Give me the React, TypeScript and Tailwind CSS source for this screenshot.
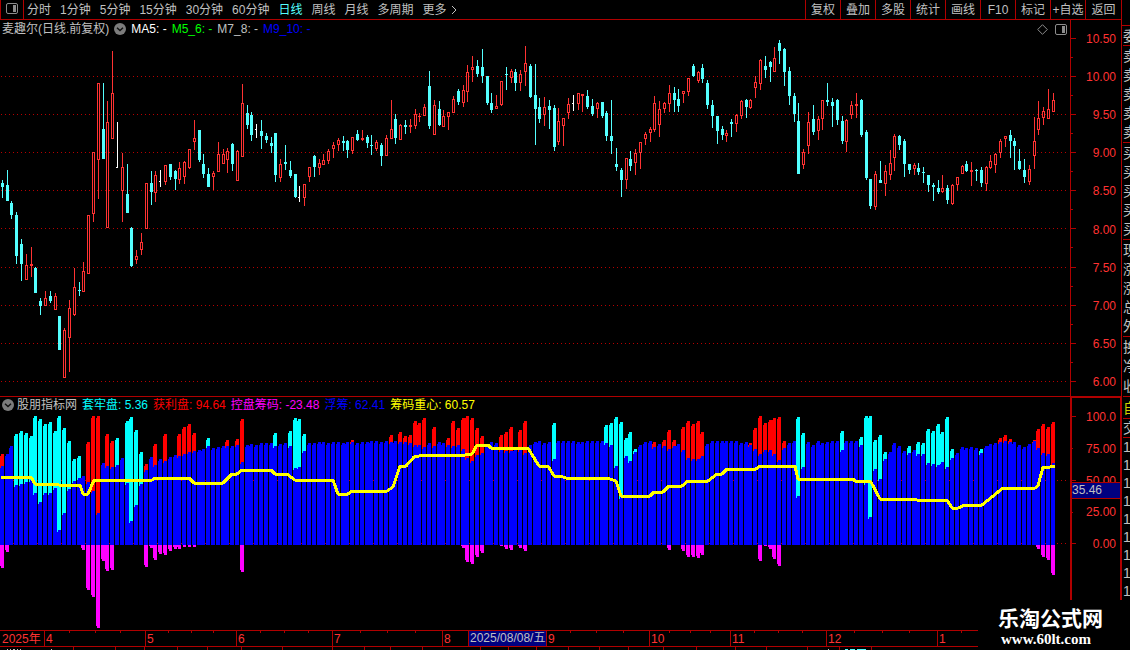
import React from "react";

/* Daily candles: kind (r = up, c = down, w = flat) followed by high, body top, body bottom, low. */
const CANDLES = `
c180,183,187,198 c170,185,201,201 c201,203,215,219 c212,215,256,264 c239,244,264,281 r254,265,280,280 r247,264,266,277 c267,268,293,293 c298,301,306,315 r291,298,306,306
c291,296,301,303 r293,296,310,310 c316,316,350,350 r328,330,378,378 r300,308,338,372 r268,287,315,316 c282,290,291,296 r262,271,292,292 r215,215,274,274 r152,152,214,222
r83,83,160,199 c83,129,159,159 r101,122,228,228 r51,93,139,139 w122,167,168,168 r153,167,191,222 c164,194,213,213 c227,228,266,267 r250,256,260,264 r233,242,250,255
r183,183,229,229 c171,183,192,205 r171,175,193,202 w170,181,182,187 r165,165,182,185 c164,164,177,180 c170,171,179,190 r162,168,180,184 r161,162,177,184 r149,149,168,169
r120,138,142,150 c130,130,160,162 c154,164,174,178 c168,174,187,187 r171,173,177,190 r142,154,172,172 r149,154,164,164 r148,151,160,173 c143,144,164,171 r150,151,181,181
r84,103,157,157 c105,113,125,129 c112,115,135,141 w124,129,130,138 c120,131,136,149 c133,136,140,143 c137,143,146,153 c133,133,175,182 r159,164,178,182 c145,162,164,170
c161,170,176,178 c174,174,197,198 w186,197,198,202 r184,184,198,206 r167,167,177,182 c155,156,167,177 r159,163,168,175 r154,160,165,165 r149,151,161,164 r142,145,149,158
r138,140,145,151 c136,141,143,151 c140,141,150,158 r137,137,151,154 c130,134,140,141 r130,138,140,141 c135,137,143,148 c135,145,146,155 r140,142,149,151 c143,145,156,166
r135,138,156,156 r100,129,139,139 c114,119,138,144 r124,125,140,140 c120,125,127,134 r119,125,127,133 r109,114,126,129 r113,116,117,122 r104,107,116,116 c71,86,126,129
r100,105,135,135 c101,109,125,126 r110,116,127,127 r112,112,117,130 r96,99,113,113 c89,91,102,105 r85,90,103,107 r65,72,92,102 r56,67,70,82 c60,66,74,77
c49,67,76,83 c76,76,103,105 c93,103,110,113 r95,106,109,109 r81,81,105,106 c67,74,75,90 r69,71,78,83 c69,72,83,91 r70,74,83,91 r46,63,72,86
c64,66,97,98 c64,95,109,145 c98,107,119,123 r97,107,115,126 c100,106,110,129 c105,108,147,151 r108,121,142,145 r118,118,126,146 r98,104,113,119 w95,103,104,111
r93,93,104,110 r94,94,96,112 c90,96,107,109 c99,106,114,116 r102,103,109,118 c102,102,116,118 c111,113,136,141 c100,136,141,154 c148,164,167,171 c168,170,180,197
r158,158,180,189 c151,159,166,171 r149,153,163,175 r142,142,153,169 r132,134,139,145 r127,129,133,142 r96,103,130,132 r101,109,125,137 r102,103,109,113 r85,93,104,112
c87,93,100,112 c89,99,106,112 r91,91,94,103 r78,78,92,96 c64,66,76,77 r71,72,81,83 c64,68,79,83 c80,83,105,109 c100,105,116,128 c116,116,131,144
c126,129,135,140 r130,133,136,142 c119,122,124,137 r114,115,124,132 r100,101,116,119 c99,100,107,118 r99,100,108,109 r76,82,88,98 r59,60,84,90 c56,66,70,78
c61,62,67,82 r47,58,72,72 c40,43,51,64 c48,49,72,86 c67,71,96,105 c93,96,114,122 c103,121,174,174 r149,152,165,169 r112,122,146,154 c105,119,132,135
r116,119,131,140 r100,100,119,130 c83,100,102,106 c98,102,106,127 c99,100,120,125 c116,121,141,144 r119,120,142,152 r101,105,115,119 r93,104,106,118 c99,100,135,137
c130,132,178,180 c179,179,206,209 r171,174,207,210 c161,180,183,183 r165,171,184,196 r150,163,175,180 r134,136,158,171 c135,136,145,150 c139,141,164,177 c164,164,170,174
r163,165,169,175 c163,168,172,175 c167,172,173,183 c175,175,185,192 c183,185,187,201 c180,188,192,194 r175,188,192,193 c185,188,200,204 r184,185,204,205 r177,177,185,191
r165,166,174,174 c161,164,171,172 r162,170,172,186 c169,170,171,181 c167,170,183,187 r166,167,184,191 r155,161,168,169 r153,154,165,173 r139,141,153,158 r136,136,139,147
c130,135,141,158 c138,141,146,170 c149,161,169,170 c159,170,177,183 r165,169,182,185 r117,141,156,169 r101,118,130,135 r107,111,118,125 r89,109,119,119 r93,100,112,112
`
  .trim()
  .split(/\s+/)
  .map((s) => ({ kind: s[0], v: s.slice(1).split(",").map(Number) }));

/* Chip bars: blue top, then optional r/c top of the coloured cap, then optional m bottom of the control bar. */
const BARS = `
466r454m568 454m552 446 485c434 484c431 482c433 480c436 493c416 502c419 493c424
493c422 488c431 530c416 513c428 489c441 481c459 478c456 476m550 482r442m590 491r416m597
513r416m628 463m561 466r434m571 467r441m570 465c438 458 483c421 521c417 505c430 484c452
470r464m567 457m548 465r444m560 459m554 461r434m555 457m551 455m549 456r434m549 454r427m547 452r424m547
451r433m547 450 449 446c438 448 447 446 446r440 446 445r439
462r419m572 445 444 445 443 443 443 446c433 444 443
446c431 468c418 467c419 451c434 443 443 442 442 443 442
442 443 442 442r440 443 442 442 441 441 442
441 442r435 441 442r432 442r436 443r435 445r421 445r423 447r418 443
446r427 442 443 445r438 446r421 445r428 449r418m548 458r416m562 461r418m564 455r428m557
453r436m553 444 442 443 450r435m546 451r432m549 451r427m550 449 450r430m548 453r421m551
445 442 441 443 442 459c423 441 441 441 441
442 442 441 441 441 441 443c425 445c423 466c417 497c422
456c438 461c432 452c449 445 442 441 447r442 444 446r440 449r430m550
446r440 444 450r427m551 458r421m557 459r424m557 459r421m558 456r432m555 444 441 441
441 441 441 441 443 442 445r443 449r428 454r416m561 450r423m546
450r420m549 454r418m559 460r417m566 448r441 443 441 496c417 467c433 442 445
441 443 442 441 441 450c431 441 441 441 445c437
483c416 517c416 469c440 479c435 459c452 452 443 446 451 453c446
450 454c442 454c443 463c429 464c431 465c424 462c432 467c417 458c449 453
447 448 447 448 453c449 446 444 443 442r438 441r435
442r439 442 445 447 444 441r440 448r429m549 453r424m557 454r427m560 463r422m575
`
  .trim()
  .split(/\s+/)
  .map((s) => {
    const [, top, cap, capTop, low] = s.match(/^(\d+)(?:([rc])(\d+))?(?:m(\d+))?$/) as RegExpMatchArray;
    return { top: +top, cap, capTop: capTop ? +capTop : 0, low: low ? +low : 0 };
  });

const CENTER_LINE =
  "1,477 31,477 35,484 57,484 59,485 80,485 83,494 88,494 94,480 152,480 155,478 189,478 194,483 223,483 232,474 237,474 242,470 271,470 275,474 287,474 295,480 333,480 338,494 348,494 352,491 387,491 393,487 400,466 406,466 414,457 424,455 465,455 472,454 477,445 488,445 491,448 528,448 539,466 548,466 554,476 560,476 566,478 607,478 616,481 621,496 650,496 654,492 663,492 669,486 682,486 688,481 708,481 717,474 722,474 727,469 756,469 760,466 795,466 798,479 853,479 855,481 868,481 871,482 880,499 915,499 917,500 947,500 952,508 958,508 965,505 982,505 1003,488 1035,488 1038,486 1043,467 1050,467 1052,466 1055,466";

const candleX = (i: number) => Math.floor(2.312 + 4.799 * i);

const PERIODS = ["分时", "1分钟", "5分钟", "15分钟", "30分钟", "60分钟", "日线", "周线", "月线", "多周期"];
const TOOLS = ["复权", "叠加", "多股", "统计", "画线", "F10", "标记", "+自选"];
const PRICES = ["10.50", "10.00", "9.50", "9.00", "8.50", "8.00", "7.50", "7.00", "6.50", "6.00"];
const GRID_Y = [76, 114, 152, 190, 228, 267, 305, 343, 381];
const MONTHS = ["4", "5", "6", "7", "8", "9", "10", "11", "12", "1"];
const MINOR_TICKS = [69, 95, 120, 168, 191, 213, 260, 284, 308, 360, 387, 415, 570, 596, 623, 669, 690, 710, 754, 778, 802, 854, 882, 909, 961];
const STRIP_TICKS = [73, 115, 144, 177, 207, 241, 282, 332, 364, 390, 422, 480, 508, 536, 568, 599, 628, 663, 696, 735, 766, 807, 839, 871];

function GridLine({ y }: { y: number }) {
  return <line x1="1" x2="1067" y1={y + 0.5} y2={y + 0.5} stroke="#b80000" strokeWidth="1" strokeDasharray="1 3" />;
}

function PriceChart() {
  return (
    <svg className="block h-[356px] w-full" viewBox="0 40 1070 356" preserveAspectRatio="none" shapeRendering="crispEdges" role="img" aria-label="日线">
      {GRID_Y.map((y) => (
        <GridLine key={y} y={y} />
      ))}
      {CANDLES.map(({ kind, v: [h, t, b, l] }, i) => {
        const x = candleX(i);
        if (kind === "r") {
          return (
            <g key={i} fill="#ff3232">
              <rect x={x} y={h} width="1" height={t - h} />
              <rect x={x} y={b} width="1" height={l - b} />
              <rect x={x - 1} y={t} width="3" height={b - t} />
              {b - t > 2 && <rect x={x} y={t + 1} width="1" height={b - t - 2} fill="#000" />}
            </g>
          );
        }
        return (
          <g key={i} fill={kind === "c" ? "#54ffff" : "#fff"}>
            <rect x={x} y={h} width="1" height={l - h} />
            <rect x={x - 1} y={t} width={kind === "c" ? 3 : 2} height={b - t} />
          </g>
        );
      })}
    </svg>
  );
}

/* A four-pixel bar whose leftmost column stops short of the outer end. */
function StepBar({ x, top, bottom, fill, dTop, dBottom }: { x: number; top: number; bottom: number; fill: string; dTop: number; dBottom: number }) {
  return (
    <g fill={fill}>
      <rect x={x - 2} y={top + dTop} width="1" height={Math.max(0, bottom - dBottom - top - dTop)} />
      <rect x={x - 1} y={top} width="3" height={bottom - top} />
    </g>
  );
}

function ChipChart() {
  return (
    <svg className="block h-[215px] w-full" viewBox="0 415 1070 215" preserveAspectRatio="none" shapeRendering="crispEdges" role="img" aria-label="股朋指标网">
      <GridLine y={480} />
      <GridLine y={543} />
      {BARS.map(({ top, cap, capTop, low }, i) => {
        const x = candleX(i);
        return (
          <g key={i}>
            {cap && <StepBar x={x} top={capTop} bottom={top + 2} fill={cap === "r" ? "#ff0000" : "#00ffff"} dTop={2} dBottom={0} />}
            <StepBar x={x} top={top} bottom={545} fill="#0000ff" dTop={2} dBottom={0} />
            {low > 0 && <StepBar x={x} top={545} bottom={low} fill="#ff00ff" dTop={0} dBottom={2} />}
          </g>
        );
      })}
      <polyline points={CENTER_LINE} fill="none" stroke="#ffff00" strokeWidth="3" strokeLinejoin="round" />
    </svg>
  );
}

function PanelIcon({ label }: { label: string }) {
  return (
    <svg className="block h-[11px] w-3" viewBox="0 0 12 11" aria-label={label}>
      <rect x="0.5" y="0.5" width="11" height="10" rx="1.5" fill="none" stroke="#8c8c8c" />
      <rect x="7" y="2" width="3" height="7" fill="#8c8c8c" />
    </svg>
  );
}

function DropIcon() {
  return (
    <svg className="block size-3" viewBox="0 0 12 12" aria-hidden="true">
      <circle cx="6" cy="6" r="6" fill="#7c7c7c" />
      <path d="M3 4.7 6 7.5 9 4.7" fill="none" stroke="#111" strokeWidth="1.4" />
    </svg>
  );
}

function SideBlock({ rows, height, color = "text-[#c0c0c0]" }: { rows: string[]; height: string; color?: string }) {
  return (
    <div className={`flex flex-col justify-around border-b border-[#b00000] text-sm ${height} ${color}`}>
      {rows.map((r, i) => (
        <span key={i} className="block h-[18px] leading-[18px] whitespace-nowrap">
          {r}
        </span>
      ))}
    </div>
  );
}

export default function App() {
  return (
    <div className="relative flex w-full overflow-hidden bg-black font-['Liberation_Sans','Noto_Sans_CJK_SC',sans-serif] text-xs text-[#c0c0c0]">
      <div className="flex min-w-0 flex-1 flex-col">
        <header className="flex h-5 items-stretch border-b border-l border-[#b00000]">
          <button aria-label="切换面板" className="flex w-[23px] items-center justify-center border-r border-[#b00000] pb-[2px]">
            <PanelIcon label="面板" />
          </button>
          <nav className="flex flex-1 items-center gap-[9px] pl-[3px] leading-[18px] whitespace-nowrap">
            {PERIODS.map((p) => (
              <button key={p} className={p === "日线" ? "text-[#54ffff]" : ""}>
                {p}
              </button>
            ))}
            <button className="flex items-center gap-1">
              更多
              <svg className="block h-[10px] w-[6px]" viewBox="0 0 6 10" aria-hidden="true">
                <path d="M1 1 5 5 1 9" fill="none" stroke="#c0c0c0" />
              </svg>
            </button>
          </nav>
          <div className="flex leading-[18px] whitespace-nowrap">
            {TOOLS.map((t) => (
              <button key={t} className="w-[35px] border-l border-[#b00000] text-center">
                {t}
              </button>
            ))}
            <button className="w-9 border-l border-[#b00000] text-center">返回</button>
          </div>
        </header>

        <div className="flex">
          <section className="min-w-0 flex-1">
            <div className="flex h-5 items-center gap-[5px] pb-[2px] pl-[2px] leading-[18px] whitespace-nowrap">
              <h1>麦趣尔(日线.前复权)</h1>
              <button aria-label="主图指标">
                <DropIcon />
              </button>
              <span className="text-white">MA5: -</span>
              <span className="text-[#00ff00]">M5_6: -</span>
              <span>M7_8: -</span>
              <span className="text-[#0000ff]">M9_10: -</span>
              <div className="ml-auto flex items-center gap-[7px] pr-[3px]">
                <svg className="block size-[11px]" viewBox="0 0 11 11" aria-hidden="true">
                  <path d="M5.5 .7 10.3 5.5 5.5 10.3 .7 5.5Z" fill="none" stroke="#8c8c8c" />
                </svg>
                <button aria-label="侧栏">
                  <PanelIcon label="侧栏" />
                </button>
              </div>
            </div>
            <PriceChart />
          </section>
          <aside className="flex w-[51px] border-l border-[#b00000]">
            <svg className="block h-[376px] w-[5px]" viewBox="0 20 5 376" shapeRendering="crispEdges" aria-hidden="true">
              {[38, ...GRID_Y].map((y, i) => (
                <g key={y} fill="#b00000">
                  <rect x="0" y={y} width="5" height="1" />
                  {i < 9 && <rect x="0" y={y + 19} width="2" height="1" />}
                </g>
              ))}
            </svg>
            <div className="flex flex-1 flex-col justify-between pt-[10px] pr-[5px] pb-[5px] text-right leading-[18px] text-[#ff3232]">
              {PRICES.map((p) => (
                <span key={p}>{p}</span>
              ))}
            </div>
          </aside>
        </div>

        <div className="flex border-t border-[#b00000]">
          <section className="min-w-0 flex-1">
            <div className="flex h-[18px] items-center gap-[5px] pb-[2px] pl-[2px] leading-4 whitespace-nowrap">
              <div className="flex items-center gap-[3px] text-[#c0c0c0]">
                <button aria-label="副图指标">
                  <DropIcon />
                </button>
                <h2>股朋指标网</h2>
              </div>
              <span className="text-[#00ffff]">套牢盘: 5.36</span>
              <span className="text-[#ff0000]">获利盘: 94.64</span>
              <span className="text-[#ff00ff]">控盘筹码: -23.48</span>
              <span className="text-[#0000ff]">浮筹: 62.41</span>
              <span className="text-[#ffff00]">筹码重心: 60.57</span>
            </div>
            <ChipChart />
          </section>
          <aside className="relative flex w-[51px] border-t border-r border-l-2 border-[#b00000]">
            <svg className="block h-[232px] w-1" viewBox="0 398 4 232" shapeRendering="crispEdges" aria-hidden="true">
              <g fill="#b00000">
                <rect x="0" y="416" width="4" height="1" />
                <rect x="0" y="448" width="1" height="1" />
                <rect x="0" y="480" width="4" height="1" />
                <rect x="0" y="512" width="1" height="1" />
                <rect x="0" y="543" width="4" height="1" />
              </g>
            </svg>
            <div className="flex h-[155px] flex-1 flex-col justify-between pt-[10px] pr-1 text-right leading-[18px] text-[#ff3232]">
              {["100.0", "75.00", "50.00", "25.00", "0.00"].map((p) => (
                <span key={p}>{p}</span>
              ))}
            </div>
            <div className="absolute top-[84px] left-0 h-[17px] w-full border-y border-[#b00000] bg-[#000080] leading-[15px] text-[#c0c0c0]">35.46</div>
          </aside>
        </div>

        <footer className="mr-[143px]">
          <div className="relative border-y border-[#b00000]">
            <svg className="absolute top-0 left-0 h-[2px] w-full" viewBox="0 0 978 2" preserveAspectRatio="none" shapeRendering="crispEdges" aria-hidden="true">
              {MINOR_TICKS.map((x) => (
                <rect key={x} x={x} y="0" width="1" height="2" fill="#b00000" />
              ))}
            </svg>
            <div className="grid h-[15px] grid-cols-[44fr_101fr_91fr_96fr_110fr_104fr_103fr_81fr_96fr_111fr_41fr] leading-4 whitespace-nowrap text-[#ff3232]">
              <span className="pl-[2px]">2025年</span>
              {MONTHS.map((m) => (
                <span key={m} className="border-l border-[#b00000] pl-px">
                  {m}
                </span>
              ))}
            </div>
            <div className="absolute top-0 left-[468px] h-[15px] w-[78px] border-l border-[#b00000] bg-[#000080] pl-px leading-[14px] whitespace-nowrap text-[#c0c0c0]">
              2025/08/08/五
            </div>
          </div>
          <svg className="block h-[3px] w-full" viewBox="0 0 978 3" preserveAspectRatio="none" shapeRendering="crispEdges" aria-hidden="true">
            {STRIP_TICKS.map((x) => (
              <rect key={x} x={x} y="0" width="1" height="3" fill="#b00000" />
            ))}
            <path d="M7 2h1v1h-1zM10 2h1v1h-1zM13 2h2v1h-2zM17 2h1v1h-1zM20 2h1v1h-1zM51 2h1v1h-1zM828 2h1v1h-1z" fill="#c0c0c0" />
            <path d="M845 2h3v1h-3zM850 2h5v1h-5zM857 2h9v1h-9z" fill="#54ffff" />
          </svg>
        </footer>
      </div>

      <aside className="w-[9px] overflow-hidden border-l border-[#b00000]">
        <div className="h-[26px] border-b border-[#b00000]" />
        <div className="pl-px">
          <SideBlock rows={["委"]} height="h-5" />
          <SideBlock rows={["卖", "卖", "卖", "卖", "卖"]} height="h-[97px]" />
          <SideBlock rows={["买", "买", "买", "买", "买"]} height="h-[97px]" />
          <SideBlock rows={["现", "涨", "涨", "总", "外"]} height="h-[97px]" />
          <SideBlock rows={["换", "净", "收"]} height="h-[60px]" />
          <SideBlock rows={["自"]} height="h-[22px]" color="text-[#d0d000]" />
          <SideBlock rows={["交"]} height="h-[19px]" />
          <div className="text-sm leading-[18px]">
            {Array.from({ length: 9 }, (_, i) => (
              <div key={i}>1</div>
            ))}
          </div>
        </div>
      </aside>

      <div className="absolute right-0 bottom-0 h-[50px] w-[152px] bg-black pt-2 pl-5 font-bold whitespace-nowrap text-white">
        <div className="text-[21px] leading-[22px]">乐淘公式网</div>
        <div className="pl-[3px] font-['Liberation_Serif',serif] text-[15px] leading-[18px]">www.60lt.com</div>
      </div>
    </div>
  );
}
